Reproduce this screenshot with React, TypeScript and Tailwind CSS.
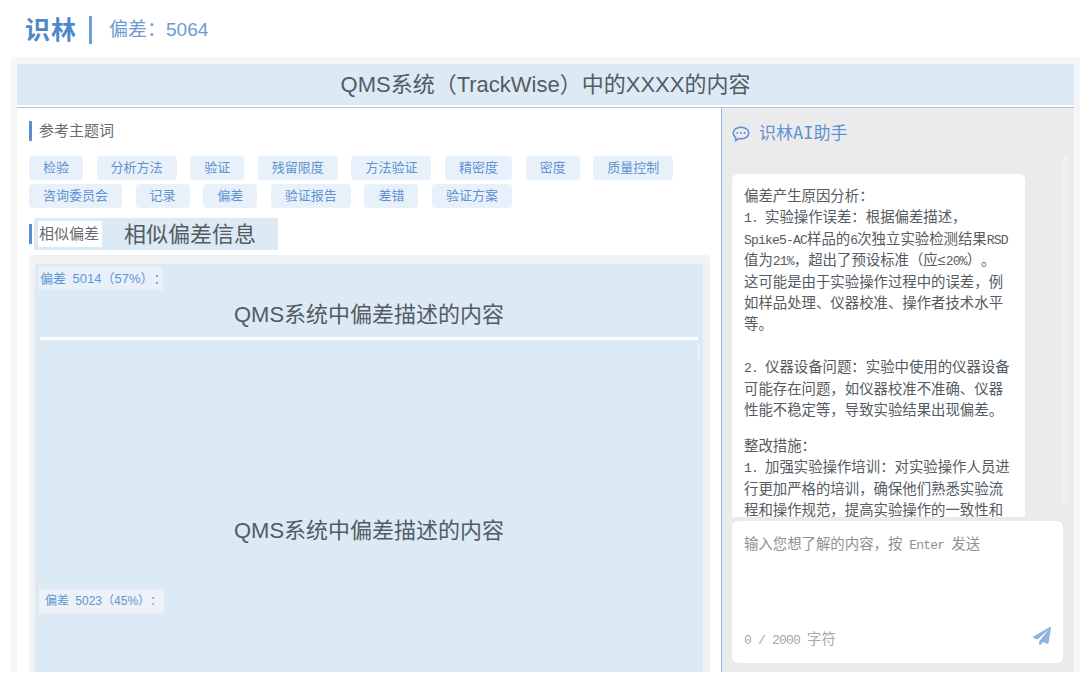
import { FaPaperPlane } from 'react-icons/fa';

const rowOne = ['检验', '分析方法', '验证', '残留限度', '方法验证', '精密度', '密度', '质量控制'];
const rowTwo = ['咨询委员会', '记录', '偏差', '验证报告', '差错', '验证方案'];

const Tag = ({ text }: { text: string }) => (
  <div className="h-6 px-[14px] rounded bg-[#e8f1fa] text-[13px] leading-6 text-[#5f92d2] whitespace-nowrap">{text}</div>
);

const Marker = () => <div className="w-[3px] h-5 bg-[#5b8fcb] shrink-0" />;

// latin runs are set narrower than the CJK around them
const MixedText = ({ text }: { text: string }) => (
  <>
    {text.split(/([\x20-\x7e]+)/).map((part, i) =>
      i % 2 === 1 ? (
        <span key={i} className="text-[13px] tracking-[-0.8px] whitespace-pre font-['Liberation_Mono',monospace]">{part}</span>
      ) : (
        <span key={i}>{part}</span>
      )
    )}
  </>
);

const ChatLines = ({ lines, className = '' }: { lines: string[]; className?: string }) => (
  <div className={className}>
    {lines.map((line) => (
      <div key={line} className="h-[21.4px] leading-[21.4px] whitespace-nowrap"><MixedText text={line} /></div>
    ))}
  </div>
);

export default function App() {
  return (
    <div className="h-[675px] w-[1080px] overflow-hidden bg-white [text-spacing-trim:space-all] font-['Liberation_Sans','Noto_Sans_CJK_SC',sans-serif]">
      {/* top bar */}
      <header className="h-[57px] flex items-center pl-[25px] pt-[3px]">
        <span className="text-[25px] font-bold text-[#4f88c9] leading-none tracking-[1px]">识林</span>
        <div className="w-[3px] h-[28px] bg-[#6f9fd4] ml-[12px] mr-[17px] -mt-[1px]" />
        <span className="text-[19px] text-[#6d9bd0]">偏差：5064</span>
      </header>

      <div className="h-[615px] ml-[11px] bg-[#f5f6f8] pt-[7px] pl-[6px] pr-[6px] flex flex-col">
        <div className="h-[41px] shrink-0 bg-[#dceaf6] flex items-center justify-center text-[22px] text-[#555b62]">
          QMS系统（TrackWise）中的XXXX的内容
        </div>
        <div className="h-[2px] shrink-0 bg-white" />
        <div className="flex-1 min-h-0 flex border-t border-[#a3bfe2]">
          {/* left column */}
          <div className="w-[705px] shrink-0 bg-white pl-3 pt-3 flex flex-col border-r border-[#94b6e4]">
            <div className="flex items-center gap-[7px]">
              <Marker />
              <span className="text-[15px] leading-[22px] text-[#666b70]">参考主题词</span>
            </div>
            <div className="mt-[14px] flex gap-[13.6px]">
              {rowOne.map((t) => <Tag key={t} text={t} />)}
            </div>
            <div className="mt-1 flex gap-[13.6px]">
              {rowTwo.map((t) => <Tag key={t} text={t} />)}
            </div>
            <div className="mt-[10px] flex items-center">
              <Marker />
              <div className="ml-[2px] h-8 w-[244px] bg-[#dceaf6] flex items-center pl-1">
                <div className="h-[26px] w-16 bg-white text-[15px] leading-[26px] text-[#666b70] whitespace-nowrap pl-px">相似偏差</div>
                <span className="ml-[22px] text-[22px] text-[#555b62]">相似偏差信息</span>
              </div>
            </div>
            <div className="mt-[5px] flex-1 min-h-0 w-[681px] bg-[#f1f2f3] rounded-t px-[6px] pr-[7px] pt-[9px] flex flex-col">
              <div className="h-[73px] shrink-0 bg-[#dceaf6] pt-[3px]">
                <div className="ml-[3px] w-[125px] h-[23px] bg-[#eaf0f7] pl-[2px] text-[13px] leading-[23px] text-[#5c97da] whitespace-nowrap [word-spacing:3px]">偏差 5014（57%）：</div>
                <div className="mt-3 text-center text-[22px] leading-[26px] text-[#555b62]">QMS系统中偏差描述的内容</div>
              </div>
              <div className="h-[3px] shrink-0 bg-[#dceaf6] px-[5px]">
                <div className="h-full bg-white" />
              </div>
              <div className="relative flex-1 min-h-0 bg-[#dceaf6] pt-[178px]">
                <div className="absolute right-[3px] top-[4px] w-[3px] h-4 bg-[#e8f0f7]" />
                <div className="text-center text-[22px] leading-[26px] text-[#555b62]">QMS系统中偏差描述的内容</div>
                <div className="mt-[45px] ml-[4px] w-[125px] h-6 bg-[#eef1f5] pl-[6px] text-[12px] leading-6 text-[#5c97da] whitespace-nowrap [word-spacing:3px]">偏差 5023（45%）：</div>
              </div>
            </div>
          </div>

          {/* assistant column */}
          <div className="flex-1 min-w-0 bg-[#ebebed] pl-[10px] pr-[6px] pb-[9px] flex flex-col">
            <div className="h-[48px] shrink-0 flex items-center gap-[9px] pt-1 text-[#5f92d2]">
              <svg width="18" height="16" viewBox="0 0 18 16" fill="none" stroke="currentColor" strokeWidth="1.6">
                <path d="M9 1.2c4.4 0 7.8 2.6 7.800 5.800s-3.400 5.800-7.800 5.800c-.9 0-1.500-.1-2.200-.2l-3.100 2v-3C2.200 10.600 1.200 8.900 1.200 7 1.200 3.800 4.600 1.200 9 1.200z" />
                <circle cx="5.300" cy="7" r="1" fill="currentColor" stroke="none" />
                <circle cx="9" cy="7" r="1" fill="currentColor" stroke="none" />
                <circle cx="12.700" cy="7" r="1" fill="currentColor" stroke="none" />
              </svg>
              <span className="text-[17px] font-['DejaVu_Sans_Mono','Noto_Sans_CJK_SC',monospace]">识林AI助手</span>
            </div>
            <div className="h-[361px] shrink-0 flex justify-between items-start overflow-hidden">
              <div className="w-[293px] mt-[18px] bg-white rounded-t-md pl-3 pt-3 text-[14.4px] text-[#555b62]">
                <ChatLines lines={['偏差产生原因分析：', '1. 实验操作误差：根据偏差描述，', 'Spike5-AC样品的6次独立实验检测结果RSD', '值为21%，超出了预设标准（应≤20%）。', '这可能是由于实验操作过程中的误差，例', '如样品处理、仪器校准、操作者技术水平', '等。']} />
                <ChatLines className="mt-[21.500px]" lines={['2. 仪器设备问题：实验中使用的仪器设备', '可能存在问题，如仪器校准不准确、仪器', '性能不稳定等，导致实验结果出现偏差。']} />
                <ChatLines className="mt-[14.500px]" lines={['整改措施：', '1. 加强实验操作培训：对实验操作人员进', '行更加严格的培训，确保他们熟悉实验流', '程和操作规范，提高实验操作的一致性和']} />
              </div>
              <div className="w-[6px] h-[350px] bg-[#f0f0f2]" />
            </div>
            <div className="mt-1 flex-1 min-h-0 w-[331px] bg-white rounded-md px-3 pt-[13px] pb-[12px] flex flex-col justify-between text-[14.4px] text-[#8d9196]">
              <div className="leading-5 whitespace-nowrap"><MixedText text="输入您想了解的内容，按 Enter 发送" /></div>
              <div className="flex items-end justify-between">
                <span className="leading-5 text-[#a5a8ac]"><MixedText text="0 / 2000 " />字符</span>
                <FaPaperPlane className="text-[18px] mb-[6px] text-[#8db4e0]" />
              </div>
            </div>
          </div>
        </div>
      </div>
    </div>
  );
}
